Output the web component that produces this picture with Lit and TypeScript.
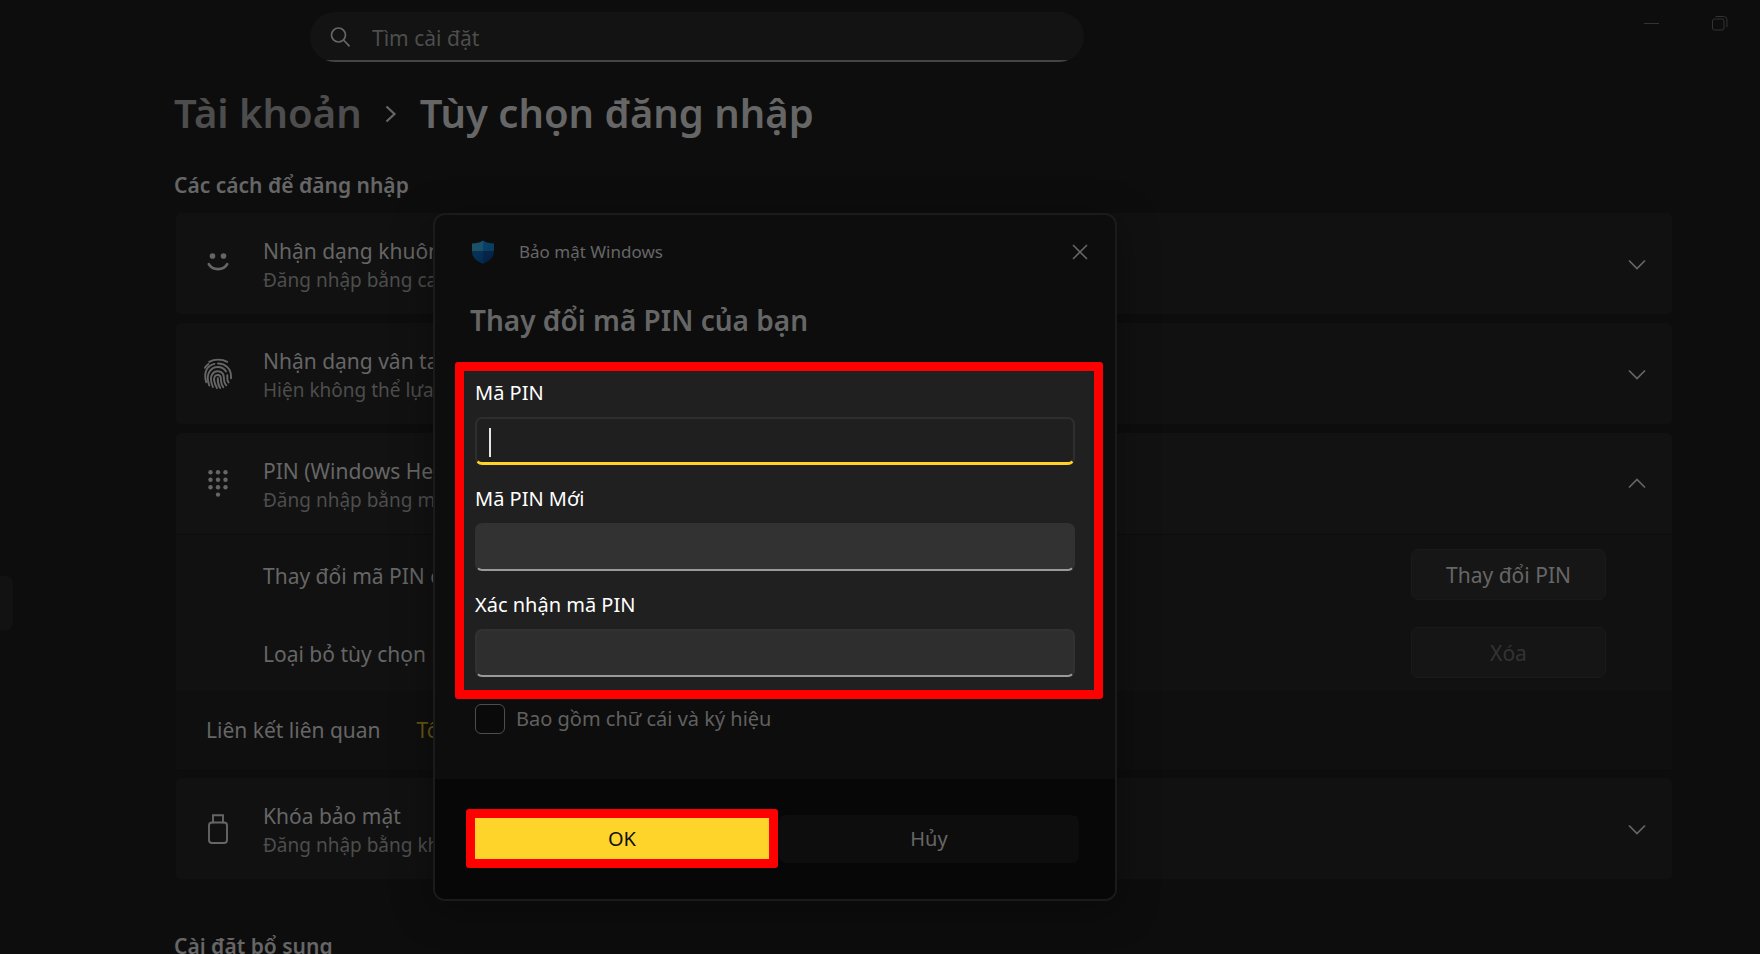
import { LitElement, html, css, svg, nothing } from "lit";
import { customElement, property } from "lit/decorators.js";

const icons = {
  face: svg`<g fill="currentColor" stroke="none"><circle cx="8.500" cy="7" r="2.800"/><circle cx="19.500" cy="7" r="2.800"/></g><path d="M4.800 15.200C8.400 21.800 19.600 21.800 23.200 15.200" stroke-width="2.700"/>`,
  finger: svg`<g stroke-width="1.900"><path d="M5.200 2.900C10.400-.1 18-.1 23.200 2.900"/><path d="M.9 8.800C1.800 7.200 3 6 4.400 5"/><path d="M2.200 23.200C-.9 12.400 3.600 6.600 10.400 4.900"/><path d="M14 4.500c7.600 0 13 5.500 13 12.700v2.100"/><path d="M5.300 26.500C2.900 20 3.600 15.600 5.400 12.700 9.300 6.300 18.600 6.600 22 12.500"/><path d="M23.300 16.200c.3 2.800-.8 5.600 1.300 7.300"/><path d="M8.900 28C6.200 21.500 6.300 17.800 8.300 15.100 11.500 10.600 19.600 11.600 19.800 18c.1 3.200.2 6.200 2.500 8.300"/><path d="M13 29C9.700 23 9.600 19.600 10.700 17.600 12.300 15 16.700 15.600 16.800 19c.1 3.700.3 6.400 2.500 9.200"/><path d="M13.800 19.200c-.2 3.600.4 6.800 2.400 9.800"/></g>`,
  keypad: svg`<g fill="currentColor" stroke="none">${[6.5, 14, 21.5].map((x) => [3.2, 10.7, 18.2].map((y) => svg`<circle cx=${x} cy=${y} r="2.200"/>`))}<circle cx="14" cy="25.600" r="2.200"/></g>`,
  usb: svg`<path d="M9 8.500V1.300h10v7.200" stroke-width="1.900"/><rect x="5" y="8.500" width="18" height="20.500" rx="3" stroke-width="1.900"/>`,
};

type IconName = keyof typeof icons;

const shared = css`
  *, *::before, *::after { box-sizing: border-box; }
  svg { display: block; flex: none; fill: none; stroke: currentColor; }
  button { font: inherit; color: inherit; border: 0; background: none; padding: 0; }
  h1, h2, p { margin: 0; }
  .face, .keypad, .finger, .usb { width: 28px; height: 30px; overflow: visible; }
`;

@customElement("setting-row")
class SettingRow extends LitElement {
  @property() icon: IconName = "face";
  @property() heading = "";
  @property() detail = "";
  @property({ type: Boolean }) open = false;

  static styles = [shared, css`
    :host { display: block; }
    .row {
      width: 100%; min-height: 101px; padding: 0 25px 0 28px;
      display: flex; align-items: center; gap: 31px;
      background: #111; border-radius: 5px; text-align: left;
    }
    .row.open { border-radius: 5px 5px 0 0; background: #121212; }
    .icon { color: #666; }
    .text { flex: 1; display: flex; flex-direction: column; padding-top: 2px; }
    .heading { font-size: 21px; line-height: 30px; color: #666; }
    .detail { font-size: 19px; line-height: 28px; color: #4d4d4d; }
    .chevron { color: #666; width: 20px; height: 20px; }
  `];

  render() {
    return html`<button class="row ${this.open ? "open" : ""}" aria-expanded=${this.open ? "true" : "false"}>
      <svg class="icon ${this.icon}" viewBox="0 0 28 30" stroke-linecap="round">${icons[this.icon]}</svg>
      <span class="text"><span class="heading">${this.heading}</span><span class="detail">${this.detail}</span></span>
      <svg class="chevron" viewBox="0 0 20 20" stroke-width="1.700"><path d=${this.open ? "M2 13.500L10 5.500L18 13.500" : "M2 6.500L10 14.500L18 6.500"}/></svg>
    </button>`;
  }
}

@customElement("pin-dialog")
class PinDialog extends LitElement {
  static styles = [shared, css`
    :host { display: block; }
    .dialog {
      background: #0d0d0d; border: 2px solid #1b1b1b; border-radius: 12px;
      overflow: hidden; box-shadow: 0 8px 40px rgba(0, 0, 0, 0.35);
    }
    .bar { display: flex; align-items: center; padding: 21px 19px 0 36px; height: 52px; gap: 24px; color: #666; }
    .bar p { flex: 1; font-size: 17px; line-height: 24px; }
    .shield { width: 24px; height: 24px; stroke: none; }
    .close { width: 32px; height: 32px; display: grid; place-items: center; }
    .title { margin: 33px 36px 0 35px; font-size: 28px; line-height: 40px; font-weight: 600; color: #666; }
    .fields {
      margin: 22px 12px 0 20px; padding: 8px 19px 13px 11px;
      border: 9px solid #f00; border-radius: 3px; background: #202020; color: #fff;
      display: flex; flex-direction: column; gap: 20px;
    }
    .field { display: flex; flex-direction: column; gap: 10px; font-size: 20px; line-height: 28px; }
    .entry { position: relative; display: flex; }
    .box {
      width: 100%; height: 48px; padding: 0 12px; font: inherit; color: #fff;
      background: #2e2e2e; border: 2px solid #323232; border-bottom-color: #9a9a9a;
      border-radius: 7px; outline: 0;
    }
    .box.second { background: #323232; }
    .box.active { background: #1f1f1f; border-color: #2e2e2e; border-bottom: 3px solid #ffd22a; }
    .caret { position: absolute; left: 14px; top: 11px; width: 2px; height: 29px; background: #e6e6e6; }
    .symbols { display: flex; align-items: center; gap: 11px; margin: 5px 40px 0; font-size: 20px; line-height: 30px; color: #606060; }
    .tick { appearance: none; margin: 0; width: 30px; height: 30px; border: 1px solid #4d4d4d; border-radius: 6px; background: #0a0a0a; }
    .actions {
      margin-top: 45px; padding: 30px 36px 31px 31px; background: #070707;
      display: grid; grid-template-columns: 312fr 300fr; align-items: center; column-gap: 1px;
      font-size: 20px; line-height: 28px;
    }
    .ok { height: 59px; padding-top: 1px; border: 9px solid #f00; border-radius: 3px; background: #ffd42a; color: #111; }
    .cancel { height: 48px; padding-top: 1px; border-radius: 7px; background: #0d0d0d; color: #666; }
  `];

  private field(id: string, label: string, kind = "") {
    return html`<div class="field">
      <label for=${id}>${label}</label>
      <div class="entry"><input class="box ${kind}" id=${id} type="password" autocomplete="off" />
        ${kind === "active" ? html`<span class="caret"></span>` : nothing}</div>
    </div>`;
  }

  render() {
    return html`<section class="dialog" role="dialog" aria-labelledby="title">
      <div class="bar">
        <svg class="shield" viewBox="0 0 24 24">
          <defs>
            <linearGradient id="a" x2="1" y2="1"><stop stop-color="#1f5163"/><stop offset="1" stop-color="#16506e"/></linearGradient>
            <linearGradient id="b" x2="1" y2="1"><stop stop-color="#0b4368"/><stop offset="1" stop-color="#083a62"/></linearGradient>
            <linearGradient id="c" x2="1" y2="1"><stop stop-color="#06325a"/><stop offset="1" stop-color="#052c52"/></linearGradient>
            <linearGradient id="d" x2="1" y2="1"><stop stop-color="#06284d"/><stop offset="1" stop-color="#051d3b"/></linearGradient>
          </defs>
          <path fill="url(#a)" d="M12 .5C9 2.700 5 3.500 1 3.500V11.500H12z"/>
          <path fill="url(#b)" d="M12 .5c3 2.200 7 3 11 3v8H12z"/>
          <path fill="url(#c)" d="M1 11.500C1 17.500 6 21.500 12 23.800V11.500z"/>
          <path fill="url(#d)" d="M23 11.500c0 6-5 10-11 12.300V11.500z"/>
        </svg>
        <p>Bảo mật Windows</p>
        <button class="close" aria-label="Đóng"><svg width="16" height="16" viewBox="0 0 16 16" stroke-width="1.600"><path d="M1 1L15 15M15 1L1 15"/></svg></button>
      </div>
      <h2 class="title" id="title">Thay đổi mã PIN của bạn</h2>
      <div class="fields">
        ${this.field("pin", "Mã PIN", "active")}
        ${this.field("new-pin", "Mã PIN Mới", "second")}
        ${this.field("confirm-pin", "Xác nhận mã PIN")}
      </div>
      <div class="symbols"><input class="tick" type="checkbox" id="symbols" /><label for="symbols">Bao gồm chữ cái và ký hiệu</label></div>
      <div class="actions"><button class="ok">OK</button><button class="cancel">Hủy</button></div>
    </section>`;
  }
}

@customElement("app-root")
class AppRoot extends LitElement {
  static styles = [shared, css`
    :host {
      display: block; position: relative; height: 100vh; overflow: hidden;
      background: #0d0d0d; color: #666; font-family: "Noto Sans", "Open Sans", sans-serif;
    }
    .top { display: flex; align-items: flex-start; justify-content: space-between; padding: 12px 28px 0 310px; }
    .search {
      width: 774px; height: 50px; display: flex; align-items: center; gap: 22px; padding: 0 20px;
      border-radius: 25px; color: #666;
      background: linear-gradient(#444, #444) bottom / 100% 2px no-repeat, #131313;
    }
    .search input { flex: 1; min-width: 0; border: 0; padding: 2px 0 0; background: none; outline: 0; font: inherit; font-size: 21px; color: #666; }
    .search input::placeholder { color: #4d4d4d; opacity: 1; }
    .window { display: flex; gap: 44px; color: #333; }
    .window button { width: 24px; height: 22px; display: grid; place-items: center; }
    .page { padding: 23px 88px 0 174px; }
    .crumbs { display: flex; align-items: center; gap: 21px; font-size: 40px; line-height: 56px; font-weight: 600; }
    .crumbs a { color: #4d4d4d; text-decoration: none; }
    .crumbs h1 { font: inherit; }
    .section { font-size: 21px; line-height: 28px; font-weight: 600; margin-top: 30px; }
    .cards { display: flex; flex-direction: column; gap: 9px; margin: 14px 0 53px 2px; }
    .group { display: flex; flex-direction: column; gap: 1px; }
    .body { background: #111; }
    .line { display: flex; align-items: center; justify-content: space-between; height: 78px; padding: 0 66px 0 87px; font-size: 21px; line-height: 30px; }
    .line span { padding-top: 3px; }
    .line button { width: 195px; height: 51px; padding-top: 2px; background: #161616; border: 1px solid #1a1a1a; border-radius: 7px; }
    .line button:disabled { color: #333; background: #151515; }
    .links { display: flex; align-items: center; gap: 36px; height: 78px; padding: 0 30px; background: #0f0f0f; border-radius: 0 0 5px 5px; font-size: 21px; line-height: 30px; }
    .links a { color: #665612; text-decoration: none; }
    .flyout { position: absolute; left: 0; top: 576px; width: 13px; height: 54px; border-radius: 0 7px 7px 0; background: #121212; }
    pin-dialog { position: absolute; left: 433px; top: 213px; width: 684px; }
  `];

  render() {
    return html`
      <header class="top">
        <label class="search">
          <svg width="20" height="20" viewBox="0 0 20 20" stroke-width="1.700"><circle cx="8.500" cy="8" r="7"/><path d="M13.500 13L19.500 19.300"/></svg>
          <input type="text" placeholder="Tìm cài đặt" aria-label="Tìm cài đặt" />
        </label>
        <div class="window">
          <button aria-label="Thu nhỏ"><svg width="16" height="16" viewBox="0 0 16 16"><path d="M0 8.500H15"/></svg></button>
          <button aria-label="Khôi phục"><svg width="16" height="16" viewBox="0 0 16 16"><rect x=".5" y="4" width="11.500" height="11" rx="2"/><path d="M3.500 1.500H11.500a3.500 3.500 0 0 1 3.500 3.500V12"/></svg></button>
        </div>
      </header>
      <main class="page">
        <nav class="crumbs">
          <a href="#">Tài khoản</a>
          <svg width="16" height="20" viewBox="0 0 16 20" stroke-width="2.200"><path d="M3.500 3.500L11.500 11L3.500 18.500"/></svg>
          <h1>Tùy chọn đăng nhập</h1>
        </nav>
        <h2 class="section">Các cách để đăng nhập</h2>
        <div class="cards">
          <setting-row icon="face" heading="Nhận dạng khuôn mặt" detail="Đăng nhập bằng camera"></setting-row>
          <setting-row icon="finger" heading="Nhận dạng vân tay" detail="Hiện không thể lựa chọn"></setting-row>
          <div class="group">
            <setting-row icon="keypad" heading="PIN (Windows Hello)" detail="Đăng nhập bằng mã PIN" open></setting-row>
            <div class="body">
              <div class="line"><span>Thay đổi mã PIN của bạn</span><button>Thay đổi PIN</button></div>
              <div class="line"><span>Loại bỏ tùy chọn này</span><button disabled>Xóa</button></div>
              <div class="links"><span>Liên kết liên quan</span><a href="#">Tổng</a></div>
            </div>
          </div>
          <setting-row icon="usb" heading="Khóa bảo mật" detail="Đăng nhập bằng khóa bảo mật"></setting-row>
        </div>
        <h2 class="section">Cài đặt bổ sung</h2>
      </main>
      <div class="flyout"></div>
      <pin-dialog></pin-dialog>
    `;
  }
}
